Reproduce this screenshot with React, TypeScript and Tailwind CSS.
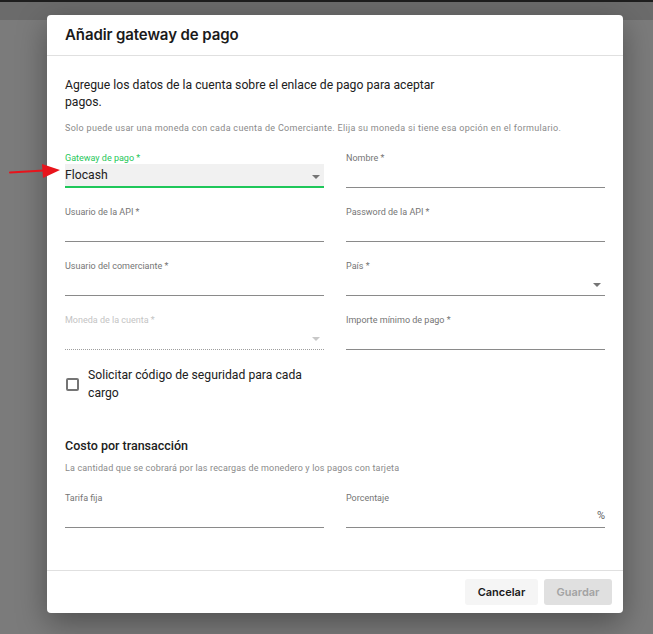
import React from "react";

const ROBOTO = "font-['Roboto',_'Liberation_Sans',_sans-serif]";
const HEAD = "font-['Inter',_'Liberation_Sans',_sans-serif]";

type FieldProps = {
  label: string;
  select?: boolean;
  disabled?: boolean;
  suffix?: string;
};

function Arrow({ disabled }: { disabled?: boolean }) {
  return (
    <span
      className={`absolute right-[4px] top-[11px] w-0 h-0 border-l-[4px] border-r-[4px] border-t-[4px] border-l-transparent border-r-transparent ${
        disabled ? "border-t-[#c8c8c8]" : "border-t-[#757575]"
      }`}
    />
  );
}

function Field({ label, select, disabled, suffix }: FieldProps) {
  return (
    <div className="flex flex-col h-[54px]">
      <span
        className={`text-[9px] leading-[12px] ${disabled ? "text-[#c4c4c4]" : "text-[#757575]"}`}
      >
        {label}
      </span>
      <div
        className={`relative h-[24px] ${
          disabled ? "border-b border-dotted border-[#9e9e9e]" : "border-b border-[#8a8a8a]"
        }`}
      >
        {select && <Arrow disabled={disabled} />}
        {suffix && (
          <span className="absolute right-0 top-[4px] text-[11px] text-[#616161]">{suffix}</span>
        )}
      </div>
    </div>
  );
}

export default function App() {
  return (
    <div className={`relative w-[653px] h-[634px] overflow-hidden bg-[#7b7b7b] ${ROBOTO}`}>
      <div className="h-[2px] bg-[#1e1e1e]" />
      <div className="h-[18px] bg-[#6b6b6b]" />

      <div className="absolute left-[47px] top-[15px] w-[576px] h-[598px] bg-white rounded-[4px] shadow-[0_10px_30px_rgba(0,0,0,0.35)] flex flex-col">
        <div className="h-[41px] border-b border-[#e0e0e0] px-[18px] flex items-center">
          <h1 className={`${HEAD} text-[15px] font-semibold text-[#1a1a1a] tracking-[-0.1px]`}>
            Añadir gateway de pago
          </h1>
        </div>

        <div className="flex-1 px-[18px] pt-[21px]">
          <p className="w-[385px] text-[12.2px] leading-[17px] text-[#212121]">
            Agregue los datos de la cuenta sobre el enlace de pago para aceptar pagos.
          </p>
          <p className="mt-[11px] text-[9px] leading-[12px] tracking-[0.3px] text-[#8a8a8a]">
            Solo puede usar una moneda con cada cuenta de Comerciante. Elija su moneda si tiene esa
            opción en el formulario.
          </p>

          <div className="mt-[18px] grid grid-cols-2 gap-x-[22px]">
            <div className="flex flex-col h-[54px]">
              <span className="text-[9px] leading-[12px] text-[#1fc75a]">Gateway de pago *</span>
              <div className="relative h-[24px] bg-[#f1f1f1] border-b-2 border-[#1fc75a] flex items-center">
                <span className="text-[12.2px] text-[#212121] pt-[1px]">Flocash</span>
                <Arrow />
              </div>
            </div>
            <Field label="Nombre *" />
            <Field label="Usuario de la API *" />
            <Field label="Password de la API *" />
            <Field label="Usuario del comerciante *" />
            <Field label="País *" select />
            <Field label="Moneda de la cuenta *" select disabled />
            <Field label="Importe mínimo de pago *" />
          </div>

          <label className="-mt-[2px] flex items-center gap-[9px] w-[259px]">
            <span className="shrink-0 ml-[1px] w-[13px] h-[13px] border-2 border-[#757575] rounded-[2px]" />
            <span className="text-[12.2px] leading-[18px] text-[#212121]">
              Solicitar código de seguridad para cada cargo
            </span>
          </label>

          <h2 className="mt-[36px] text-[12.5px] font-medium text-[#212121] leading-[16px]">
            Costo por transacción
          </h2>
          <p className="mt-[8px] text-[9px] leading-[12px] tracking-[0.15px] text-[#8a8a8a]">
            La cantidad que se cobrará por las recargas de monedero y los pagos con tarjeta
          </p>

          <div className="mt-[18px] grid grid-cols-2 gap-x-[22px]">
            <Field label="Tarifa fija" />
            <Field label="Porcentaje" suffix="%" />
          </div>
        </div>

        <div className="h-[43px] border-t border-[#e0e0e0] flex items-center justify-end gap-[6px] pr-[11px]">
          <button
            type="button"
            className={`${HEAD} h-[26px] w-[73px] rounded-[3px] bg-[#f5f5f5] text-[11px] font-semibold text-[#1a1a1a]`}
          >
            Cancelar
          </button>
          <button
            type="button"
            className={`${HEAD} h-[26px] w-[68px] rounded-[3px] bg-[#e0e0e0] text-[11px] font-semibold text-[#a3a3a3]`}
          >
            Guardar
          </button>
        </div>
      </div>

      <svg className="absolute left-[8px] top-[162px]" width="54" height="18" viewBox="0 0 54 18">
        <path d="M2 10.5 L36 8.5" stroke="#e8141c" strokeWidth="2" strokeLinecap="round" />
        <path d="M34 2 L52 8 L35 16 Z" fill="#e8141c" />
      </svg>
    </div>
  );
}
